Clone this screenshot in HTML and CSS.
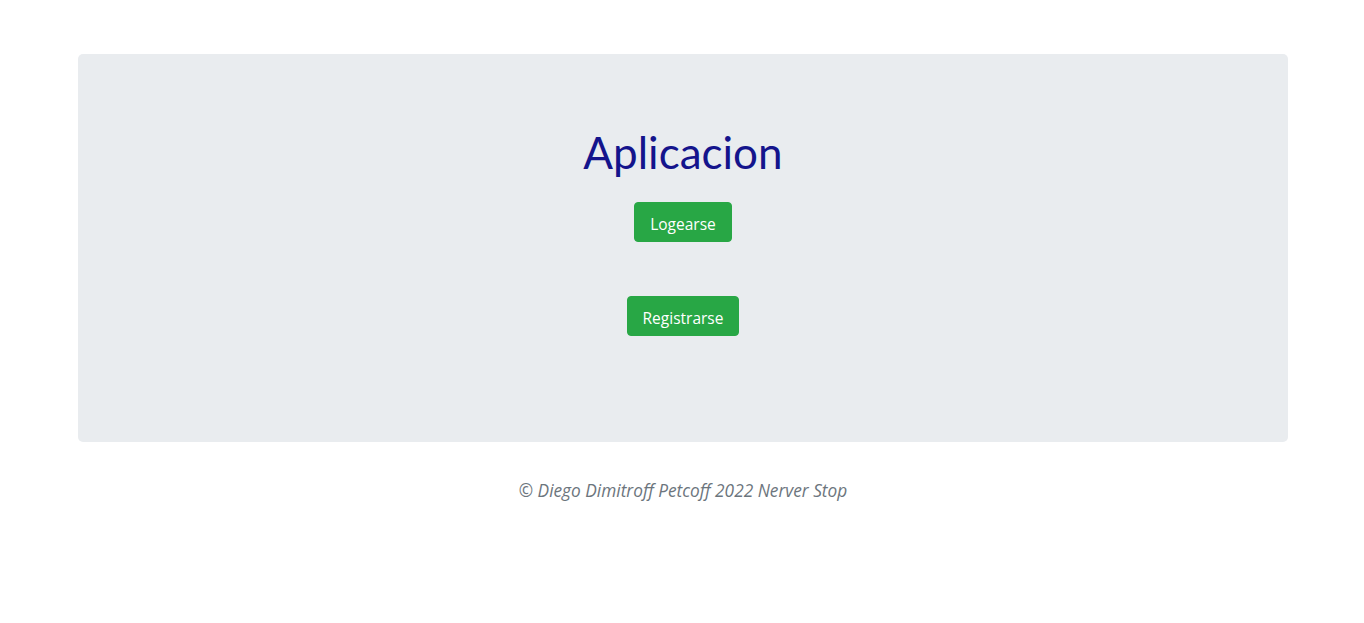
FILE: index.html
```html
<!DOCTYPE html>
<html lang="es">
<head>
<meta charset="utf-8">
<title>Aplicacion</title>
<link rel="stylesheet" href="styles.css">
</head>
<body>
<main class="page">
  <section class="jumbotron">
    <h1 class="title">Aplicacion</h1>
    <div class="actions">
      <button class="btn btn-success" type="button">Logearse</button>
      <button class="btn btn-success" type="button">Registrarse</button>
    </div>
  </section>
  <footer class="footer">
    <p class="credits">© Diego Dimitroff Petcoff 2022 Nerver Stop</p>
  </footer>
</main>
</body>
</html>
```

FILE: styles.css
```css
* { box-sizing: border-box; }

html, body {
  margin: 0;
  padding: 0;
  background: #ffffff;
  font-family: "Open Sans", "Noto Sans", "Liberation Sans", sans-serif;
  font-size: 16px;
  color: #212529;
}

.page {
  padding: 54px 76px 0 78px;
}

.jumbotron {
  background: #e9ecef;
  border-radius: 5px;
  height: 388px;
  padding: 64px 32px;
  display: flex;
  flex-direction: column;
  align-items: center;
}

.title {
  margin: 1px 0 0;
  font-family: "Lato", "Open Sans", sans-serif;
  font-size: 44px;
  font-weight: 400;
  line-height: 67px;
  color: #14148c;
}

.actions {
  margin-top: 16px;
  display: flex;
  flex-direction: column;
  align-items: center;
  gap: 54px;
}

.btn {
  font-family: inherit;
  font-size: 15.5px;
  line-height: 24px;
  padding: 9px 15px 5px;
  border: 1px solid #28a745;
  border-radius: 4px;
  background: #28a745;
  color: #ffffff;
  cursor: pointer;
}

.footer {
  padding-top: 37px;
  text-align: center;
}

.credits {
  margin: 0;
  font-style: italic;
  font-size: 17.3px;
  line-height: 24px;
  color: #6c757d;
}
```
